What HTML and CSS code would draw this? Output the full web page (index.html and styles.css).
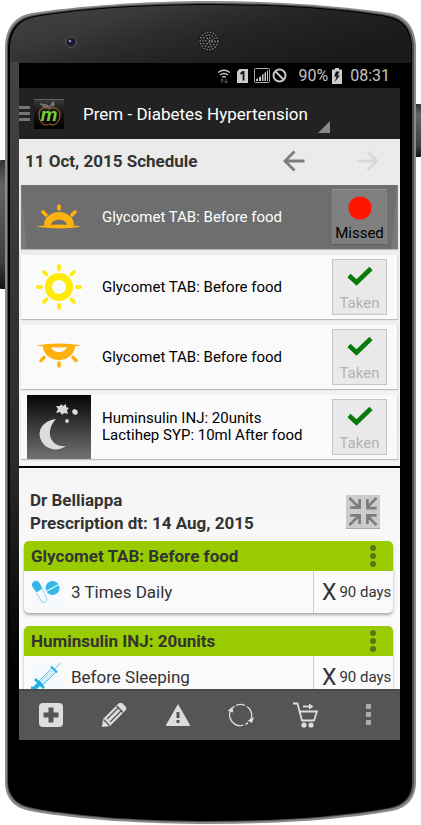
FILE: index.html
```html
<!DOCTYPE html>
<html lang="en">
<head>
<meta charset="utf-8">
<meta name="viewport" content="width=device-width, initial-scale=1">
<title>Medication schedule</title>
<link rel="stylesheet" href="styles.css">
</head>
<body>
<svg class="defs" aria-hidden="true">
  <symbol id="check" viewBox="0 0 26 20"><path d="M2 9.500l7.500 7L24 2.500" fill="none" stroke="#087a0c" stroke-width="4.600"/></symbol>
  <symbol id="dots" viewBox="0 0 8 24"><circle cx="4" cy="4" r="3"/><circle cx="4" cy="12" r="3"/><circle cx="4" cy="20" r="3"/></symbol>
</svg>
<div class="device">
  <svg class="shell" viewBox="0 0 421 825" preserveAspectRatio="none" aria-hidden="true">
    <defs>
      <linearGradient id="face" x1="0" y1="0" x2="1" y2="0.5">
        <stop offset="0" stop-color="#464344"/><stop offset="0.3" stop-color="#3a3838"/><stop offset="0.65" stop-color="#242424"/><stop offset="1" stop-color="#1a1a1a"/>
      </linearGradient>
      <linearGradient id="side" x1="0" y1="0" x2="0" y2="1">
        <stop offset="0" stop-color="#454243"/><stop offset="0.55" stop-color="#2b2b2b"/><stop offset="0.85" stop-color="#000"/><stop offset="1" stop-color="#000"/>
      </linearGradient>
      <linearGradient id="key" x1="0" y1="0" x2="0" y2="1">
        <stop offset="0" stop-color="#333"/><stop offset="0.2" stop-color="#626466"/><stop offset="0.8" stop-color="#3a3c3d"/><stop offset="1" stop-color="#111"/>
      </linearGradient>
    </defs>
    <rect x="0" y="160" width="7" height="129" rx="1" fill="url(#key)"/>
    <rect x="414" y="104" width="7" height="53" rx="1" fill="url(#key)"/>
    <path d="M5 46C6 27 15 16 32 13C78 6 145 1 210 1S342 6 390 13C406 16 415 27 416 46V782C416 798 407 808 392 811C340 820 275 824 210 824S80 820 30 811C14 808 5 798 5 782Z" fill="#8b8b8b"/>
    <path d="M7 46C8 28 17 18 33 15C79 7 145 3 210 3S342 7 388 15C404 18 413 28 414 46V782C414 797 405 806 390 809C339 818 275 822 210 822S81 818 32 809C16 806 7 797 7 782Z" fill="#4c4c4c"/>
    <path d="M8 46C9 29 18 19 34 16C80 8 145 4 210 4S341 8 387 16C403 19 411 29 412 46V782C412 796 404 805 389 808C338 817 275 821 210 821S82 817 33 808C17 805 8 796 8 782Z" fill="#000"/>
    <path d="M10 46C11 30 19 20 35 17C80 9 145 5 210 5S341 9 386 17C402 20 410 30 411 46V63H10Z" fill="url(#face)"/>
    <rect x="10" y="62" width="9" height="720" fill="url(#side)"/>
    <circle cx="71" cy="42" r="5.500" fill="#282828" stroke="#5a5858" stroke-width="1"/><circle cx="71" cy="42" r="3" fill="#15153d"/><circle cx="70" cy="41" r="1.300" fill="#8c8cc8"/>
    <circle cx="209" cy="41" r="10.500" fill="#161616"/>
    <g fill="none" stroke="#777" stroke-width="1.600" stroke-dasharray="1.700 1.300"><circle cx="209" cy="41" r="8.800"/><circle cx="209" cy="41" r="6"/><circle cx="209" cy="41" r="3.200"/><circle cx="209" cy="41" r="0.800"/></g>
  </svg>

  <main class="screen">
    <div class="status">
      <svg width="14" height="16" viewBox="0 0 14 16" fill="none" stroke="#c8c8c8" stroke-width="1.300"><path d="M1 4.500Q7 0 13 4.500M3 7Q7 4 11 7M5 9.300Q7 8 9 9.300"/><path d="M5 15v-4m-1.500 1.500L5 11l1.500 1.500M9 11v4m-1.500-1.500L9 15l1.500-1.500" stroke="#686868" stroke-width="1"/></svg>
      <svg class="sim" width="11" height="14" viewBox="0 0 11 14"><path d="M2.500 0H11v14H0V2.500z" fill="#ccc"/><path d="M3.500 5l2.500-2h.5v8.500" fill="none" stroke="#111" stroke-width="1.800"/></svg>
      <svg width="16" height="15" viewBox="0 0 16 15"><rect x="0.500" y="0.500" width="15" height="14" rx="1" fill="none" stroke="#aaa"/><path d="M2 13v-1.500L4 10v3zM5 13V9.500L7 8v5zM8 13V7l1.500-1.500V13zM10.500 13V5L12 3.500V13zM13 13V2.500h1V13z" fill="#ccc"/></svg>
      <svg class="ban" width="15" height="15" viewBox="0 0 15 15" fill="none" stroke="#c4c4c4" stroke-width="2"><circle cx="7.500" cy="7.500" r="6"/><path d="M3.300 3.300l8.400 8.400"/></svg>
      <span>90%</span>
      <svg class="battery" width="10" height="16" viewBox="0 0 10 16"><path d="M3 0h4v1.500h3V16H0V1.500h3z" fill="#ccc"/><path d="M7.500 3.500H4L2.200 8.500h2.500L2.500 14 8 7.500H5.500z" fill="#111"/></svg>
      <span>08:31</span>
    </div>

    <header class="appbar">
      <button class="menu" aria-label="Open menu"><svg width="11" height="15" viewBox="0 0 11 15" fill="#767676"><path d="M0 0h11v3H0zM0 6h11v3H0zM0 12h11v3H0z"/></svg></button>
      <svg class="logo" width="30" height="30" viewBox="0 0 30 30" aria-hidden="true">
        <defs><linearGradient id="lg" x1="0" y1="0" x2="0" y2="1"><stop offset="0" stop-color="#3c3c3c"/><stop offset="0.5" stop-color="#111"/><stop offset="1" stop-color="#000"/></linearGradient></defs>
        <rect width="30" height="30" fill="url(#lg)"/><path d="M0 0.500h30" stroke="#626262"/>
        <path d="M15 10C11 7 5 9 5 16c0 6 4 10 7 10 2 0 2-1 3-1s2 1 4 1c3 0 7-4 7-10 0-7-7-9-11-6z" fill="none" stroke="#9b5b1f" stroke-width="1.200"/>
        <path d="M16 9l2-5M6 5l7 1 4 3M8 7l7 1" fill="none" stroke="#777" stroke-width="1.300"/><ellipse cx="19" cy="5" rx="1.700" ry="2.600" fill="#777"/>
        <text x="15" y="22" text-anchor="middle" class="logo-letter">m</text>
      </svg>
      <label class="profile">
        <select aria-label="Profile"><option>Prem - Diabetes Hypertension</option></select>
      </label>
    </header>

    <section class="schedule">
      <div class="day">
        <h1>11 Oct, 2015 Schedule</h1>
        <button aria-label="Previous day"><svg width="22" height="22" viewBox="0 0 22 22" fill="none" stroke="#7c7c7c" stroke-width="2.800"><path d="M11.500 1.500L2 11l9.500 9.500M2 11h19.500"/></svg></button>
        <button aria-label="Next day" disabled><svg width="22" height="22" viewBox="0 0 22 22" fill="none" stroke="#d9d9d9" stroke-width="2.800"><path d="M10.500 1.500L20 11l-9.500 9.500M20 11H0"/></svg></button>
      </div>
      <ul class="doses">
        <li class="dose missed">
          <span class="when sunrise"><svg width="46" height="25" viewBox="0 0 46 25"><g stroke="#ffb20f" stroke-width="3.600" stroke-linecap="round"><path d="M23 2v3M7 8l3 3M39 8l-3 3"/></g><path d="M8 21a15 13 0 0 1 30 0h-7c-1-7-15-7-16 0z" fill="#ffb20f"/><path d="M0 22.500Q10 20.500 23 20.500T46 22.500Q34 24.500 23 24.500T0 22.500z" fill="#ffb20f"/></svg></span>
          <p>Glycomet TAB: Before food</p>
          <button class="mark"><svg width="26" height="24" viewBox="0 0 26 24"><circle cx="13" cy="12" r="11.500" fill="#ff1500"/></svg>Missed</button>
        </li>
        <li class="dose">
          <span class="when"><svg width="46" height="46" viewBox="0 0 46 46" fill="none" stroke="#ffea0a"><circle cx="23" cy="23" r="10.500" stroke-width="7"/><path stroke-width="3.800" stroke-linecap="round" d="M23 2v3M23 41v3M2 23h3M41 23h3M8 8l2.500 2.500M35.500 35.500L38 38M8 38l2.500-2.500M35.500 10.500L38 8"/></svg></span>
          <p>Glycomet TAB: Before food</p>
          <button class="mark" disabled><svg width="26" height="24"><use href="#check" width="26" height="20"/></svg>Taken</button>
        </li>
        <li class="dose">
          <span class="when sunset"><svg width="46" height="25" viewBox="0 0 46 25"><g stroke="#ffb20f" stroke-width="3.600" stroke-linecap="round"><path d="M23 20v3M8 14.500l-3 3M37 14.500l3 3"/></g><path d="M7 3a16 14 0 0 0 32 0h-8c-1 8-15 8-16 0z" fill="#ffb20f"/><path d="M0 2.500Q10 0.500 23 0.500T46 2.500Q34 4.500 23 4.500T0 2.500z" fill="#ffb20f"/></svg></span>
          <p>Glycomet TAB: Before food</p>
          <button class="mark" disabled><svg width="26" height="24"><use href="#check" width="26" height="20"/></svg>Taken</button>
        </li>
        <li class="dose">
          <span class="when"><svg width="64" height="64" viewBox="0 0 64 64"><defs><linearGradient id="night" x1="0" y1="0" x2="0" y2="1"><stop offset="0" stop-color="#050505"/><stop offset="1" stop-color="#727272"/></linearGradient></defs><rect width="64" height="64" fill="url(#night)"/><path d="M29 24C15 26 10 36 14 45c4 10 17 12 25 6C24 53 17 37 29 24z" fill="#ddd"/><path d="M34 9l2 2 3-2v3l3 1-2 2 1 4-4-1-2 2-2-3-4 1 2-4-2-3h4z" fill="#d8d8d8"/><path d="M47 14l3 1 1 3-2 2-3-1-1-3z" fill="#ddd"/><circle cx="40" cy="26" r="2" fill="#ccc"/></svg></span>
          <p>Huminsulin INJ: 20units<br>Lactihep SYP: 10ml After food</p>
          <button class="mark" disabled><svg width="26" height="24"><use href="#check" width="26" height="20"/></svg>Taken</button>
        </li>
      </ul>
    </section>

    <section class="prescription">
      <div class="doctor">
        <h2>Dr Belliappa<br>Prescription dt: 14 Aug, 2015</h2>
        <button class="collapse" aria-label="Collapse"><svg width="34" height="33" viewBox="0 0 34 34"><g fill="none" stroke="#7c7c7c" stroke-width="2.800"><path d="M3 3l10 10M4 13h9.500V4M31 3L21 13M21.500 4v9.500H31M3 31l10-10M4 21h9.500v9M31 31L21 21M21.500 30v-9H31"/></g></svg></button>
      </div>
      <article class="card">
        <header><h3>Glycomet TAB: Before food</h3><button aria-label="More options"><svg width="8" height="24" fill="#5d741f"><use href="#dots"/></svg></button></header>
        <div class="detail">
          <svg class="kind" width="30" height="30" viewBox="0 0 30 30"><rect width="30" height="30" fill="#f6f9fb"/><ellipse cx="21.500" cy="11" rx="7" ry="7" fill="#34b6e8"/><path d="M15 14.500L28 7.500" stroke="#e9f7fd" stroke-width="1.300"/><path d="M5.500 15.500l6-4L8.500 6a4 4 0 0 0-7 4z" fill="#34b6e8"/><path d="M5.800 16l5 9a3.300 3.300 0 0 0 5-3.500L11.300 12" fill="#f7fbfd" stroke="#8fd2ee" stroke-width="1"/></svg>
          <p>3 Times Daily</p>
          <div class="span"><b>X</b>90 days</div>
        </div>
      </article>
      <article class="card">
        <header><h3>Huminsulin INJ: 20units</h3><button aria-label="More options"><svg width="8" height="24" fill="#5d741f"><use href="#dots"/></svg></button></header>
        <div class="detail">
          <svg class="kind" width="30" height="30" viewBox="0 0 30 30"><rect width="30" height="30" fill="#f6f9fb"/><path d="M8 19L21 6l4 4-13 13z" fill="#e3f5fc" stroke="#62c5ec" stroke-width="1"/><path d="M11 18.500l10-10M13 20.500l10-10" stroke="#62c5ec" stroke-width="1.200" stroke-dasharray="1 1.500"/><path d="M24 7l6-6.500" stroke="#74c6e8" stroke-width="1"/><path d="M20 4.500l6 6" stroke="#34b6e8" stroke-width="2.400"/><path d="M4 17l9 9" stroke="#22aee6" stroke-width="2.600"/><path d="M10 20l-8 8" stroke="#22aee6" stroke-width="4"/><path d="M0 25l5 5" stroke="#22aee6" stroke-width="2.600"/></svg>
          <p>Before Sleeping</p>
          <div class="span"><b>X</b>90 days</div>
        </div>
      </article>
    </section>

    <nav class="tools">
      <button aria-label="Add"><svg width="26" height="26" viewBox="0 0 26 26"><rect x="1" y="1" width="24" height="24" rx="4" fill="#ddd"/><path d="M13 5.500v15M5.500 13h15" stroke="#555" stroke-width="5"/></svg></button>
      <button aria-label="Edit"><svg width="26" height="26" viewBox="0 0 26 26"><path d="M1 25l1-8L17 2q2-2 4-1l4 4q1 2-1 4L9 24z" fill="#ddd"/><path d="M6 17L18 5M9 20L21 8M15.500 4l6.500 6.500M2.500 17.500l6 6" stroke="#555" stroke-width="1.300"/></svg></button>
      <button aria-label="Alerts"><svg width="26" height="26" viewBox="0 0 26 26"><path d="M13 2l12 21q0 1-1 1H2q-1 0-1-1z" fill="#ddd"/><path d="M13 10v6M13 18v3" stroke="#555" stroke-width="3"/></svg></button>
      <button aria-label="Sync"><svg width="26" height="26" viewBox="0 0 26 26" fill="none" stroke="#ddd" stroke-width="1.300"><path d="M8 3.500A10.500 10.500 0 0 1 17 3.500M19 4.500A10.500 10.500 0 0 1 23 17M20 20.500A10.500 10.500 0 0 1 17.500 22.500M15.500 23A10.500 10.500 0 0 1 3 8M4.500 6L6.500 4.300"/><path d="M1 8.500L4 6l.5 3.500zM21 18.500l4-2-1.500 3.500z" fill="#ddd"/></svg></button>
      <button aria-label="Order"><svg width="26" height="26" viewBox="0 0 26 26" fill="none" stroke="#ddd" stroke-width="1.800"><path d="M1 1.500h4.500L10 18.500h12.500M7.500 9.500H25l-3 9"/><path d="M11 4.500h7"/><path d="M17 1.500l4.500 3-4.500 3z" fill="#ddd" stroke="none"/><g fill="#ddd" stroke="none"><circle cx="12" cy="23" r="2.600"/><circle cx="19" cy="23" r="2.600"/></g></svg></button>
      <button aria-label="More"><svg width="26" height="26" viewBox="0 0 26 26" fill="#aaa"><path d="M11 2h5v5h-5zM11 10h5v5h-5zM11 18h5v5h-5z"/></svg></button>
    </nav>
  </main>
</div>
</body>
</html>
```
FILE: styles.css
```css
* { box-sizing: border-box; }

body {
  margin: 0;
  background: #fff;
  font-family: Roboto, "Liberation Sans", sans-serif;
  color: #333;
}

h1, h2, h3, p, ul { margin: 0; padding: 0; }
ul { list-style: none; }
svg { display: block; flex: none; }
button {
  border: 0;
  padding: 0;
  background: none;
  font: inherit;
  color: inherit;
}

.defs { position: absolute; width: 0; height: 0; }

.device {
  position: relative;
  display: flex;
  height: 100vh;
  padding: 63px 21px 85px 19px;
}
.shell {
  position: absolute;
  inset: 0;
  width: 100%;
  height: 100%;
}
.screen {
  position: relative;
  flex: 1;
  min-width: 0;
  display: flex;
  flex-direction: column;
  overflow: hidden;
  background: #fafafa;
}

.status {
  flex: none;
  display: flex;
  align-items: center;
  justify-content: flex-end;
  height: 25px;
  padding-right: 10px;
  background: #000;
  color: #c4c4c4;
  font-size: 16px;
}
.sim { margin: 0 6px; }
.ban { margin: 0 11px 0 2px; }
.battery { margin: 0 8px 0 4px; }

.appbar {
  flex: none;
  display: flex;
  align-items: center;
  height: 51px;
  background: #222;
}
.logo { margin-left: 4px; }
.logo-letter {
  font: italic bold 19px "Liberation Sans", sans-serif;
  fill: #72cf35;
}
.profile {
  position: relative;
  margin-left: 19px;
  padding-right: 22px;
}
.profile::after {
  content: "";
  position: absolute;
  right: 0;
  bottom: -6px;
  border: 6px solid #8a8a8a;
  border-top-color: transparent;
  border-left-color: transparent;
}
.profile select {
  appearance: none;
  display: block;
  height: 26px;
  padding: 0;
  border: 0;
  background: none;
  color: #fff;
  font: 17px Roboto, "Liberation Sans", sans-serif;
}

.schedule {
  flex: none;
  padding: 0 2px 7px;
  border-bottom: 2px solid #000;
  background: linear-gradient(#eaeaea, #f5f5f5);
}
.day {
  display: flex;
  align-items: center;
  height: 46px;
  padding: 0 19px 2px 4px;
}
.day h1 {
  flex: 1;
  font-size: 17px;
}
.day button + button { margin-left: 52px; }

.doses {
  display: flex;
  flex-direction: column;
  gap: 6px;
}
.dose {
  display: flex;
  align-items: center;
  height: 64px;
  padding-right: 10px;
  background: #fafafa;
  border-right: 1px solid #ddd;
  box-shadow: 0 1px 1px #bbb;
  color: #000;
  font-size: 15px;
  line-height: 17px;
}
.dose p { flex: 1; }
.when {
  display: flex;
  justify-content: center;
  width: 64px;
  margin: 0 11px 0 6px;
}
.sunrise { padding-bottom: 2px; }
.sunset { padding-bottom: 4px; }
.mark {
  display: flex;
  flex-direction: column;
  align-items: center;
  justify-content: space-between;
  width: 55px;
  height: 56px;
  padding: 6px 0 2px;
  border: 1px solid #c4c4c4;
  background: #e9e9e9;
  color: #b2b2b2;
}
.missed {
  border-right-color: #848484;
  background:
    linear-gradient(85deg, #7a7a7a 5px, transparent 6px),
    linear-gradient(275deg, #7a7a7a 5px, transparent 6px),
    #6e6e6e;
  color: #fff;
}
.missed .mark {
  border-color: #929292 #858585 #5a5a5a;
  background: #7f7f7f;
  color: #000;
}

.prescription {
  flex: 1;
  min-height: 0;
  overflow: hidden;
  padding: 0 7px 0 5px;
  background: linear-gradient(#f5f5f5, #fcfcfc);
}
.doctor {
  display: flex;
  align-items: center;
  justify-content: space-between;
  height: 73px;
  padding: 16px 13px 2px 6px;
}
.doctor h2 {
  font-size: 17px;
  line-height: 23px;
}
.collapse {
  background: #ccc;
  border-bottom: 1px solid #aaa;
}
.card {
  margin-bottom: 13px;
  border-radius: 5px;
  background: #fafafa;
  box-shadow: 0 2px 3px #aaa;
}
.card header {
  display: flex;
  align-items: center;
  justify-content: space-between;
  height: 30px;
  padding: 0 16px 0 7px;
  border-radius: 5px 5px 0 0;
  background: #99cc00;
}
.card h3 { font-size: 17px; }
.detail {
  display: flex;
  align-items: stretch;
  height: 42px;
}
.kind { margin: 6px 10px 0 7px; }
.detail p {
  flex: 1;
  align-self: center;
  font-size: 17px;
}
.span {
  display: flex;
  align-items: center;
  gap: 3px;
  width: 80px;
  padding-left: 8px;
  border-left: 1px solid #ccc;
  font-size: 15px;
  white-space: nowrap;
}
.span b {
  font-size: 23px;
  font-weight: 400;
}

.tools {
  flex: none;
  display: grid;
  grid-template-columns: repeat(6, 1fr);
  height: 51px;
  border-top: 2px solid #4b4b4b;
  background: #555;
}
.tools button {
  display: flex;
  align-items: center;
  justify-content: center;
  padding-bottom: 1px;
}
```
